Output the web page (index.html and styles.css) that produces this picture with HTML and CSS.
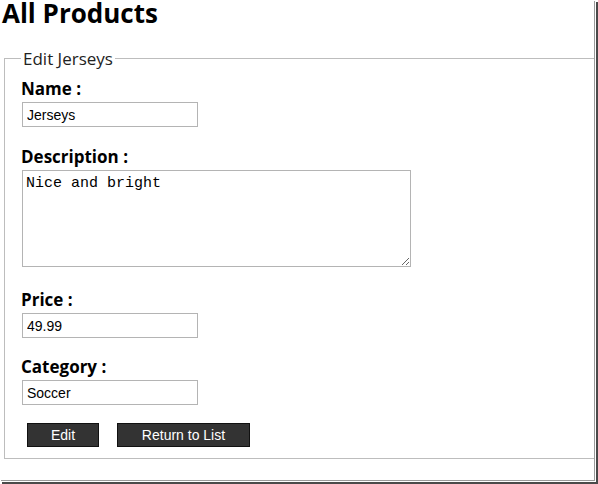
FILE: index.html
```html
<!DOCTYPE html>
<html lang="en">
<head>
    <meta charset="UTF-8">
    <title>Edit Jerseys</title>
    <link rel="stylesheet" href="styles.css">
</head>
<body>
    <div class="frame">
        <div class="shot">
            <h1>All Products</h1>

            <form class="edit-form">
                <fieldset>
                    <legend>Edit Jerseys</legend>

                    <div class="field field-name">
                        <label for="name">Name :</label>
                        <input type="text" id="name" value="Jerseys">
                    </div>

                    <div class="field field-desc">
                        <label for="description">Description :</label>
                        <textarea id="description">Nice and bright</textarea>
                    </div>

                    <div class="field field-price">
                        <label for="price">Price :</label>
                        <input type="text" id="price" value="49.99">
                    </div>

                    <div class="field">
                        <label for="category">Category :</label>
                        <input type="text" id="category" value="Soccer">
                    </div>

                    <div class="actions">
                        <button type="submit" class="btn btn-edit">Edit</button>
                        <button type="button" class="btn btn-return">Return to List</button>
                    </div>
                </fieldset>
            </form>
        </div>
    </div>
</body>
</html>
```

FILE: styles.css
```css
body {
    margin: 0;
    padding: 0;
    background: #fff;
    font-family: 'Open Sans', 'Noto Sans', sans-serif;
    color: #000;
}

/* screenshot frame with its drop shadow on the right and bottom */
.frame {
    width: 598px;
    height: 484px;
    overflow: hidden;
    position: relative;
}

.frame::after {
    content: "";
    position: absolute;
    left: 2px;
    top: 2px;
    width: 594px;
    height: 480px;
    border-right: 3px solid #4a4a4a;
    border-bottom: 3px solid #4a4a4a;
    z-index: 0;
}

.shot {
    position: relative;
    z-index: 1;
    width: 594px;
    height: 480px;
    overflow: hidden;
    background: #fff;
    box-shadow: 1px 1px 0 #9a9a9a;
}

h1 {
    margin: 0 0 0 2px;
    font-size: 26px;
    line-height: 27px;
    font-weight: 700;
}

.edit-form {
    margin: 20px 0 0 4px;
}

fieldset {
    width: 640px;
    margin: 0;
    padding: 10px 0 11px 16px;
    border: 1px solid #bdbdbd;
    border-right: none;
}

legend {
    margin-left: 0;
    padding: 2px 2px 0;
    font-size: 17px;
    line-height: 20px;
    color: #222;
}

.field {
    margin-bottom: 21px;
}

.field-name {
    margin-bottom: 20px;
}

.field-desc {
    margin-bottom: 23px;
}

.field-price {
    margin-bottom: 19px;
}

.field label {
    display: block;
    margin-bottom: 3px;
    font-size: 17px;
    font-weight: 700;
    line-height: 20px;
}

.field input {
    display: block;
    width: 176px;
    height: 25px;
    margin: 0 0 0 1px;
    padding: 0 4px;
    box-sizing: border-box;
    border: 1px solid #b4b4b4;
    font-family: 'Liberation Sans', Arial, sans-serif;
    font-size: 14px;
    color: #000;
}

.field textarea {
    display: block;
    width: 389px;
    height: 97px;
    margin: 0 0 0 1px;
    padding: 4px 3px;
    box-sizing: border-box;
    border: 1px solid #b4b4b4;
    font-family: 'Liberation Mono', 'Courier New', monospace;
    font-size: 15px;
    line-height: 18px;
    color: #000;
    resize: both;
}

.actions {
    display: flex;
    gap: 18px;
    margin-left: 6px;
    margin-top: -3px;
}

.btn {
    height: 24px;
    padding: 0;
    background: #333;
    color: #fff;
    border: 1px solid #111;
    font-family: 'Liberation Sans', Arial, sans-serif;
    font-size: 14px;
    cursor: pointer;
}

.btn-edit {
    width: 72px;
}

.btn-return {
    width: 133px;
}
```
